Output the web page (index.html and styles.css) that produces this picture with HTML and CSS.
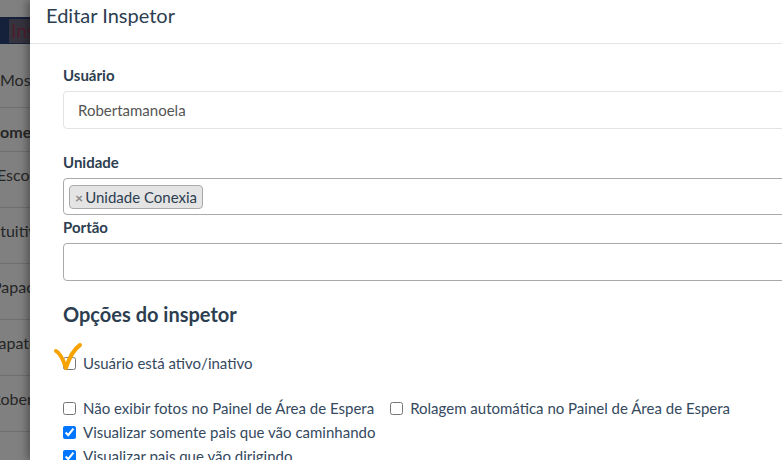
FILE: index.html
```html
<!DOCTYPE html>
<html lang="pt-br">
<head>
    <meta charset="utf-8">
    <meta name="viewport" content="width=device-width">
    <title>Editar Inspetor</title>
    <link rel="stylesheet" href="styles.css">
</head>
<body>
    <div id="screen">
        <div class="page-behind">
            <div class="nav-bar">
                <span class="nav-brand"></span>
                <span class="nav-item">Ins</span>
            </div>
            <div class="show-row">Mostrar</div>
            <div class="table-head">Nome</div>
            <div class="table-row">Escola</div>
            <div class="table-row">Intuitivo</div>
            <div class="table-row">Papaosi</div>
            <div class="table-row">Sapato</div>
            <div class="table-row">Roberta</div>
            <div class="show-row">Mostrando</div>
        </div>

        <div class="modal">
            <div class="modal-header">
                <h3>Editar Inspetor</h3>
            </div>
            <div class="modal-body">
                <div class="form-group">
                    <label>Usuário</label>
                    <div class="form-control readonly">Robertamanoela</div>
                </div>
                <div class="form-group tight">
                    <label>Unidade</label>
                    <div class="select-box">
                        <span class="chip"><span class="chip-x">×</span>Unidade Conexia</span>
                    </div>
                </div>
                <div class="form-group last">
                    <label>Portão</label>
                    <div class="form-control"></div>
                </div>

                <h4>Opções do inspetor</h4>

                <div class="check-line first">
                    <label class="check"><input type="checkbox"> Usuário está ativo/inativo</label>
                    <svg class="mark" width="32" height="32" viewBox="0 0 32 32">
                        <path d="M4 10 C8 12 11 18 14 27 C17 17 21 9 28 4" fill="none" stroke="#f6a300" stroke-width="4" stroke-linecap="round" stroke-linejoin="round"/>
                    </svg>
                </div>

                <div class="check-line">
                    <label class="check"><input type="checkbox"> Não exibir fotos no Painel de Área de Espera</label>
                    <label class="check"><input type="checkbox"> Rolagem automática no Painel de Área de Espera</label>
                </div>
                <div class="check-line">
                    <label class="check"><input type="checkbox" checked> Visualizar somente pais que vão caminhando</label>
                </div>
                <div class="check-line">
                    <label class="check"><input type="checkbox" checked> Visualizar pais que vão dirigindo</label>
                </div>
            </div>
        </div>
    </div>
</body>
</html>
```

FILE: styles.css
```css
body {
    margin: 0;
    font-family: Lato, "Open Sans", sans-serif;
    overflow: hidden;
}

#screen {
    display: flex;
    width: 782px;
    height: 460px;
    overflow: hidden;
    background: #808080;
}

/* page dimmed behind the modal */
.page-behind {
    width: 30px;
    flex-shrink: 0;
    overflow: hidden;
    background: #808080;
    color: #262626;
    font-size: 15px;
    padding-top: 17px;
}

.nav-bar {
    height: 27px;
    background: #15203a;
    display: flex;
    align-items: center;
    white-space: nowrap;
    overflow: hidden;
}

.nav-brand {
    width: 5px;
    height: 14px;
    background: #45474d;
}

.nav-item {
    margin-left: 9px;
    padding: 2px 0 2px 2px;
    background: #35333d;
    color: #4e1e2e;
    font-size: 19px;
    line-height: 20px;
}

.show-row {
    height: 64px;
    line-height: 20px;
    padding-top: 26px;
    box-sizing: border-box;
    border-bottom: 1px solid #6f6f6f;
    white-space: nowrap;
    font-size: 16px;
}

.table-head {
    height: 44px;
    padding-top: 14px;
    box-sizing: border-box;
    font-weight: 700;
    border-bottom: 1px solid #6f6f6f;
    white-space: nowrap;
    text-indent: -12px;
    font-size: 16px;
}

.table-row {
    height: 56px;
    padding-top: 13px;
    box-sizing: border-box;
    border-bottom: 1px solid #6f6f6f;
    white-space: nowrap;
    text-indent: -9px;
    font-size: 16px;
}

.table-row:nth-child(4) { text-indent: -3px; }
.table-row:nth-child(5) { text-indent: -13px; }
.table-row:nth-child(6) { text-indent: -8px; }
.table-row:nth-child(7) { text-indent: -10px; }

/* modal */
.modal {
    width: 820px;
    flex-shrink: 0;
    background: #fff;
    color: #2c3e50;
    box-shadow: -3px 0 8px rgba(0, 0, 0, 0.35);
    position: relative;
}

.modal-header {
    padding: 3px 16px 16px;
    border-bottom: 1px solid #e5e5e5;
}

.modal-header h3 {
    margin: 0;
    font-size: 20px;
    font-weight: 400;
    line-height: 24px;
}

.modal-body {
    padding: 21px 33px;
}

.form-group {
    margin-bottom: 23px;
}

.form-group.tight {
    margin-bottom: 2px;
}

.form-group.last {
    margin-bottom: 0;
}

.form-group label {
    display: block;
    font-weight: 700;
    font-size: 15px;
    line-height: 21px;
    margin-bottom: 5px;
}

.form-control {
    height: 36px;
    border: 1px solid #aaa;
    border-radius: 4px;
    padding: 0 14px;
    font-size: 15px;
    line-height: 36px;
    color: #555;
}

.form-control.readonly {
    border-color: #e3e3e3;
}

.select-box {
    height: 37px;
    box-sizing: border-box;
    border: 1px solid #aaa;
    border-radius: 4px;
    padding: 6px 5px 0;
}

.chip {
    display: inline-block;
    height: 22px;
    line-height: 22px;
    padding: 0 5px;
    background: #e4e4e4;
    border: 1px solid #aaa;
    border-radius: 4px;
    font-size: 15px;
    color: #2c3e50;
}

.chip-x {
    color: #888;
    font-weight: 700;
    margin-right: 2px;
    font-size: 14px;
}

h4 {
    margin: 21px 0 25px;
    font-size: 20px;
    font-weight: 700;
    line-height: 24px;
}

.check-line {
    display: flex;
    gap: 16px;
    position: relative;
    height: 24px;
    align-items: center;
    font-size: 15px;
    color: #34495e;
}

.check-line.first {
    margin-bottom: 21px;
}

.check {
    display: flex;
    align-items: center;
    gap: 5px;
    white-space: nowrap;
}

.check input {
    margin: 0 2px 0 0;
    width: 13px;
    height: 13px;
}

.mark {
    position: absolute;
    left: -11px;
    top: -10px;
}
```
